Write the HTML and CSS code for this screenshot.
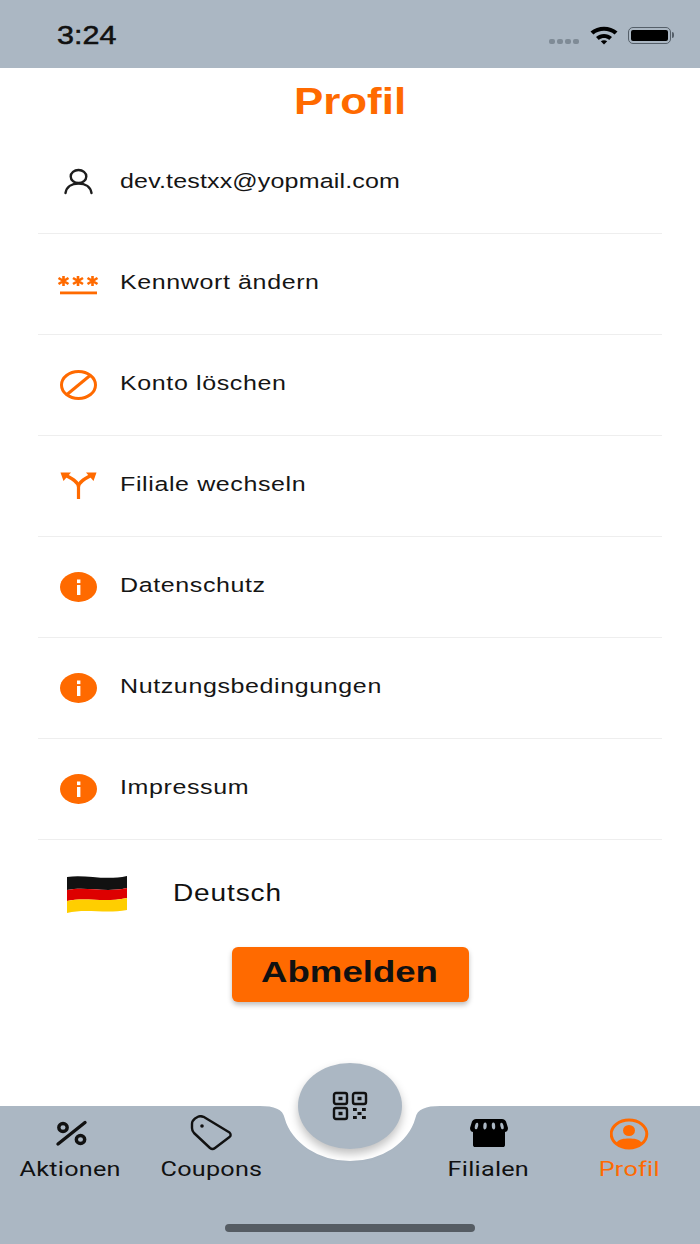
FILE: index.html
```html
<!DOCTYPE html>
<html>
<head>
    <title>Profil</title>
    <link rel="stylesheet" href="styles.css">
</head>
<body>
    <div class="phone">
        <div class="status-bar">
            <span class="clock"><span class="wide">3:24</span></span>
            <div class="status-icons">
                <div class="signal"><i></i><i></i><i></i><i></i></div>
                <svg class="wifi" width="30" height="20" viewBox="0 0 30 20">
                    <path d="M1.5 6.5C9 0 21 0 28.5 6.5L25.6 9.6C19.6 4.6 10.4 4.6 4.4 9.6Z"/>
                    <path d="M7 12C11.5 8 18.5 8 23 12L20.2 15C17 12.4 13 12.4 9.8 15Z"/>
                    <path d="M11.8 16.3C13.6 15 16.4 15 18.2 16.3L15 19.6Z"/>
                </svg>
                <div class="battery"><div class="battery-fill"></div></div>
                <div class="battery-cap"></div>
            </div>
        </div>

        <h1 class="title"><span class="wide">Profil</span></h1>

        <div class="menu">
            <div class="row">
                <svg class="icon" viewBox="0 0 38 30" fill="none" stroke="#1d1d1d" stroke-width="2.4">
                    <ellipse cx="19.5" cy="8.5" rx="7.8" ry="6.5"/>
                    <path d="M6.5 25C7.5 19 12.5 15.5 19.5 15.5S31.5 19 32.5 25" stroke-linecap="round"/>
                </svg>
                <span class="label email"><span class="wide">dev.testxx@yopmail.com</span></span>
            </div>
            <div class="row">
                <svg class="icon" viewBox="0 0 38 30" fill="#ff6a00">
                    <g stroke="#ff6a00" stroke-width="2.6">
                        <path d="M4.5 7V17M-0.5 9L9.5 15M9.5 9L-0.5 15"/>
                        <path d="M19 7V17M14 9L24 15M24 9L14 15"/>
                        <path d="M33.5 7V17M28.5 9L38.5 15M38.5 9L28.5 15"/>
                    </g>
                    <rect x="1" y="22.5" width="37" height="2.8"/>
                </svg>
                <span class="label"><span class="wide">Kennwort ändern</span></span>
            </div>
            <div class="row">
                <svg class="icon" viewBox="0 0 38 30" fill="none" stroke="#ff6a00" stroke-width="3">
                    <ellipse cx="19.5" cy="15" rx="17" ry="13.5"/>
                    <path d="M8 24.5L31 5.5"/>
                </svg>
                <span class="label"><span class="wide">Konto löschen</span></span>
            </div>
            <div class="row">
                <svg class="icon" viewBox="0 0 38 30" fill="none" stroke="#ff6a00" stroke-width="3.2">
                    <path d="M19.5 28V16C19.5 11 14 8 7 4.5"/>
                    <path d="M19.5 16C19.5 11 25 8 32 4.5"/>
                    <path d="M1.5 1.5H12L4.5 10Z" fill="#ff6a00" stroke="none"/>
                    <path d="M37.5 1.5H27L34.5 10Z" fill="#ff6a00" stroke="none"/>
                </svg>
                <span class="label"><span class="wide">Filiale wechseln</span></span>
            </div>
            <div class="row">
                <svg class="icon" viewBox="0 0 38 30">
                    <ellipse cx="19.5" cy="15" rx="18.5" ry="15" fill="#ff6a00"/>
                    <rect x="18" y="13" width="3.4" height="10" fill="#fff"/>
                    <rect x="18" y="7.5" width="3.4" height="3.6" fill="#fff"/>
                </svg>
                <span class="label"><span class="wide">Datenschutz</span></span>
            </div>
            <div class="row">
                <svg class="icon" viewBox="0 0 38 30">
                    <ellipse cx="19.5" cy="15" rx="18.5" ry="15" fill="#ff6a00"/>
                    <rect x="18" y="13" width="3.4" height="10" fill="#fff"/>
                    <rect x="18" y="7.5" width="3.4" height="3.6" fill="#fff"/>
                </svg>
                <span class="label"><span class="wide">Nutzungsbedingungen</span></span>
            </div>
            <div class="row">
                <svg class="icon" viewBox="0 0 38 30">
                    <ellipse cx="19.5" cy="15" rx="18.5" ry="15" fill="#ff6a00"/>
                    <rect x="18" y="13" width="3.4" height="10" fill="#fff"/>
                    <rect x="18" y="7.5" width="3.4" height="3.6" fill="#fff"/>
                </svg>
                <span class="label"><span class="wide">Impressum</span></span>
            </div>
            <div class="lang-row">
                <svg class="flag" width="62" height="44" viewBox="0 0 62 44">
                    <path d="M1 7C20 4 38 11 61 6V18C38 23 20 16 1 20Z" fill="#111"/>
                    <path d="M1 20C20 16 38 23 61 18V28C38 33 20 27 1 31Z" fill="#dd0000"/>
                    <path d="M1 31C20 27 38 33 61 28V40C38 44 20 38 1 43Z" fill="#ffce00"/>
                </svg>
                <span class="lang-label"><span class="wide">Deutsch</span></span>
            </div>
        </div>

        <div class="logout-wrap">
            <button class="logout"><span class="wide">Abmelden</span></button>
        </div>

        <div class="tabbar">
            <svg class="notch" width="200" height="57" viewBox="0 0 200 57">
                <path d="M0 0H10C24 0 33 3 34.6 12A67 55 0 0 0 165.4 12C167 3 176 0 190 0H200Z" fill="#fff"/>
            </svg>
            <div class="qr-button">
                <svg width="36" height="30" viewBox="0 0 36 30" fill="none" stroke="#111" stroke-width="2.4">
                    <rect x="2" y="2" width="13" height="11" rx="2"/>
                    <rect x="21" y="2" width="13" height="11" rx="2"/>
                    <rect x="2" y="17" width="13" height="11" rx="2"/>
                    <g fill="#111" stroke="none">
                        <rect x="6.5" y="5.8" width="4" height="3.4"/>
                        <rect x="25.5" y="5.8" width="4" height="3.4"/>
                        <rect x="6.5" y="20.8" width="4" height="3.4"/>
                        <rect x="21" y="17" width="3.8" height="3"/>
                        <rect x="30" y="17" width="3.8" height="3"/>
                        <rect x="25.5" y="21" width="4" height="3"/>
                        <rect x="21" y="25" width="3.8" height="3"/>
                        <rect x="30" y="25" width="3.8" height="3"/>
                    </g>
                </svg>
            </div>
            <div class="tabs">
                <div class="tab tab-1">
                    <svg class="tab-icon" width="34" height="32" viewBox="0 0 34 32" fill="none" stroke="#111" stroke-width="3.4">
                        <ellipse cx="9" cy="9.5" rx="4.2" ry="4"/>
                        <ellipse cx="26.5" cy="21.5" rx="4.2" ry="4"/>
                        <path d="M4 26L31 4.5" stroke-linecap="round"/>
                    </svg>
                    <span class="tab-label"><span class="wide">Aktionen</span></span>
                </div>
                <div class="tab tab-2">
                    <svg class="tab-icon" width="44" height="36" viewBox="0 0 44 36" fill="none" stroke="#111" stroke-width="2.4" stroke-linejoin="round">
                        <path d="M2 13V9C2 7 3 5 5 3.5L8 1.8C9.5 1 11.5 1 13.5 1.8L39.5 17.5C41 19 41 21 39.5 22L25 33C23.5 34.2 21.5 34.2 20 33L4 18C2.5 16.5 2 15 2 13Z"/>
                        <circle cx="12" cy="11" r="1.8" fill="#111" stroke="none"/>
                    </svg>
                    <span class="tab-label"><span class="wide">Coupons</span></span>
                </div>
                <div class="tab tab-3">
                    <svg class="tab-icon" width="38" height="30" viewBox="0 0 38 30">
                        <path d="M6 1H32C34 1 35 2 36 3.5L38 10C38 13 36 14 35 14V27C35 28.5 34 29 33 29H5C4 29 3 28.5 3 27V14C2 14 0 13 0 10L2 3.5C3 2 4 1 6 1Z" fill="#000"/>
                        <g fill="#abb7c3">
                            <ellipse cx="6.5" cy="8" rx="1.6" ry="3.4" transform="rotate(12 6.5 8)"/>
                            <ellipse cx="15" cy="8" rx="1.7" ry="3.4" transform="rotate(4 15 8)"/>
                            <ellipse cx="23.5" cy="8" rx="1.7" ry="3.4" transform="rotate(-4 23.5 8)"/>
                            <ellipse cx="32" cy="8" rx="1.6" ry="3.4" transform="rotate(-12 32 8)"/>
                        </g>
                    </svg>
                    <span class="tab-label"><span class="wide">Filialen</span></span>
                </div>
                <div class="tab tab-4 active">
                    <svg class="tab-icon" width="40" height="32" viewBox="0 0 40 32">
                        <ellipse cx="19" cy="16" rx="17.8" ry="14" fill="none" stroke="#ff6a00" stroke-width="3"/>
                        <ellipse cx="19" cy="12.5" rx="6" ry="5.6" fill="#ff6a00"/>
                        <path d="M6 25C9 21 14 20.5 19 20.5S29 21 32 25C28 29 24 30 19 30S10 29 6 25Z" fill="#ff6a00"/>
                    </svg>
                    <span class="tab-label"><span class="wide">Profil</span></span>
                </div>
            </div>
            <div class="home-bar"></div>
        </div>
    </div>
</body>
</html>
```

FILE: styles.css
```css
html, body {
    margin: 0;
    padding: 0;
}
body {
    font-family: Roboto, "Liberation Sans", sans-serif;
    background: white;
    color: #111;
}
.phone {
    width: 700px;
    height: 1244px;
    display: flex;
    flex-direction: column;
    overflow: hidden;
}
/* text in this app runs wider than the stock font */
.wide {
    display: inline-block;
    transform: scaleX(1.22);
    transform-origin: left center;
    white-space: nowrap;
}

.status-bar {
    height: 68px;
    flex: none;
    background: #abb7c3;
    display: flex;
    justify-content: space-between;
    padding: 0 26px 0 57px;
}
.clock {
    width: 100px;
    margin-top: 21px;
    font-family: "Liberation Sans", sans-serif;
    font-size: 25px;
    line-height: 28px;
    font-weight: 500;
    -webkit-text-stroke: 0.5px #111;
}
.status-icons {
    display: flex;
    align-items: center;
    height: 20px;
    margin-top: 25px;
}
.signal {
    display: flex;
    gap: 2px;
    margin-top: 12px;
    margin-right: 10px;
}
.signal i {
    width: 6px;
    height: 5px;
    border-radius: 2px;
    background: #7f8b96;
}
.wifi {
    margin-right: 9px;
}
.battery {
    width: 43px;
    height: 17px;
    box-sizing: border-box;
    border: 1.5px solid #555f69;
    border-radius: 5px;
    padding: 2px;
}
.battery-fill {
    height: 100%;
    background: #000;
    border-radius: 2px;
}
.battery-cap {
    width: 2px;
    height: 6px;
    margin-left: 1px;
    background: #555f69;
    border-radius: 0 2px 2px 0;
}

.title {
    margin: 0;
    height: 65px;
    flex: none;
    text-align: center;
    color: #ff6a00;
    font-family: "Liberation Sans", sans-serif;
    font-size: 36px;
    line-height: 68px;
    font-weight: 700;
}
.title .wide {
    transform-origin: center center;
}

.menu {
    margin: 0 38px;
    flex: none;
}
.row {
    height: 100px;
    border-bottom: 1px solid #eeeeee;
    display: flex;
    align-items: center;
    padding-left: 21px;
}
.icon {
    width: 38px;
    height: 30px;
    flex: none;
    overflow: visible;
}
.label {
    margin-left: 23px;
    margin-top: -5px;
    font-family: "Liberation Sans", sans-serif;
    font-size: 20.5px;
    line-height: 26px;
    letter-spacing: 0.5px;
    color: #151515;
}
.email {
    letter-spacing: 0.13px;
}
.lang-row {
    height: 104px;
    display: flex;
    align-items: center;
    padding-left: 28px;
}
.flag {
    flex: none;
}
.lang-label {
    margin-left: 45px;
    margin-top: 2px;
    font-family: "Liberation Sans", sans-serif;
    font-size: 23px;
    line-height: 28px;
    letter-spacing: 0.7px;
    color: #111;
}

.logout-wrap {
    display: flex;
    justify-content: center;
    flex: none;
    margin-top: 3px;
}
.logout {
    width: 237px;
    height: 55px;
    padding: 0;
    border: none;
    border-radius: 6px;
    background: #ff6a00;
    color: #111;
    font-family: "Liberation Sans", sans-serif;
    font-size: 30px;
    line-height: 50px;
    font-weight: 700;
    box-shadow: 0 3px 5px rgba(0,0,0,0.25);
    display: flex;
    align-items: flex-start;
    justify-content: center;
}
.logout .wide {
    transform-origin: center center;
}

.tabbar {
    position: relative;
    margin-top: auto;
    height: 138px;
    flex: none;
    background: #abb7c3;
}
.notch {
    position: absolute;
    left: 250px;
    top: 0;
}
.qr-button {
    position: absolute;
    left: 298px;
    top: -43px;
    width: 104px;
    height: 86px;
    border-radius: 50%;
    background: #abb7c3;
    box-shadow: 0 5px 10px rgba(0,0,0,0.25);
    display: flex;
    align-items: center;
    justify-content: center;
}
.tabs {
    display: grid;
    grid-template-columns: 141px 141px 1fr 141px 141px;
    grid-template-areas: "a b . c d";
}
.tab {
    display: flex;
    flex-direction: column;
    align-items: center;
    height: 74px;
    position: relative;
}
.tab-1 { grid-area: a; }
.tab-2 { grid-area: b; }
.tab-3 { grid-area: c; }
.tab-4 { grid-area: d; }
.tab-icon {
    margin-top: 12px;
}
.tab-2 .tab-icon {
    margin-top: 9px;
}
.tab-label {
    position: absolute;
    top: 50px;
    width: 100%;
    text-align: center;
    font-size: 20px;
    line-height: 26px;
    letter-spacing: 0.2px;
    color: #111;
}
.tab-label .wide {
    transform: scaleX(1.26);
    transform-origin: center center;
}
.active .tab-label {
    color: #ff6a00;
}
.home-bar {
    position: absolute;
    left: 225px;
    bottom: 12px;
    width: 250px;
    height: 8px;
    border-radius: 4px;
    background: #555c63;
}
```
